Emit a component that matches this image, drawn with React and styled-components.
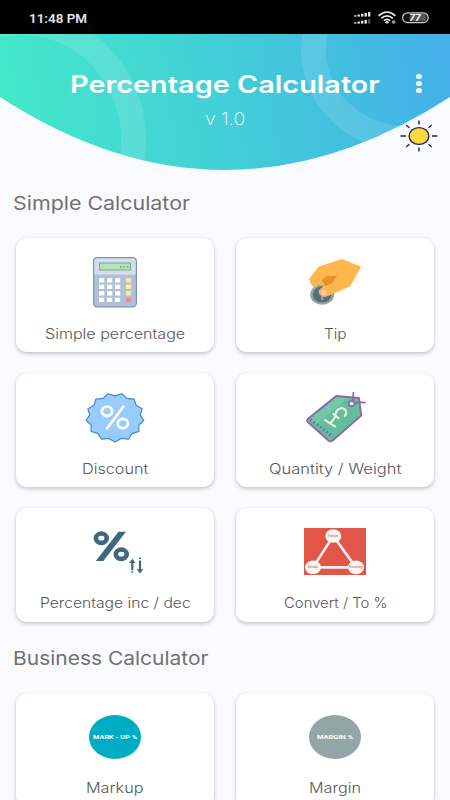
import React, { useLayoutEffect, useRef, useState } from "react";
import styled, { createGlobalStyle } from "styled-components";

const GlobalStyle = createGlobalStyle`
  * {
    box-sizing: border-box;
  }
  body {
    margin: 0;
    background-color: #fafbff;
    font-family: Inter, "Open Sans", sans-serif;
    overflow: hidden;
  }
`;

const Screen = styled.div`
  display: flex;
  flex-direction: column;
  width: 450px;
  height: 800px;
  overflow: hidden;
  background-color: #fafbff;
`;

const StatusBar = styled.div`
  display: flex;
  flex: none;
  justify-content: space-between;
  align-items: center;
  height: 34px;
  padding: 2px 20px 0 29px;
  background-color: #000;
  color: #e6e6e6;
  font-family: Roboto, sans-serif;
  font-size: 12.5px;
  font-weight: 600;
`;

const StatusIcons = styled.div`
  display: flex;
  align-items: center;
  height: 14px;
  svg {
    display: block;
  }
`;

const Header = styled.header`
  position: relative;
  flex: none;
  display: flex;
  flex-direction: column;
  align-items: center;
  height: 137px;
  padding-top: 34px;
  color: #fff;
`;

const Backdrop = styled.svg`
  position: absolute;
  top: 0;
  left: 0;
`;

const Title = styled.h1`
  position: relative;
  margin: 0;
  font-size: 24px;
  font-weight: 600;
  line-height: 33px;
`;

const Version = styled.div`
  position: relative;
  margin-top: 7px;
  font-size: 17px;
  font-weight: 200;
  line-height: 22px;
`;

const MenuButton = styled.button`
  position: absolute;
  top: 40px;
  right: 28px;
  display: flex;
  flex-direction: column;
  gap: 1.6px;
  padding: 0;
  border: 0;
  background: none;
  span {
    width: 6px;
    height: 5.2px;
    border-radius: 50%;
    background-color: #fff;
  }
`;

const ThemeButton = styled.button`
  position: absolute;
  top: 86px;
  right: 12px;
  padding: 0;
  border: 0;
  background: none;
  svg {
    display: block;
  }
`;

const SectionTitle = styled.h2`
  flex: none;
  height: 26px;
  margin: 0 0 0 13px;
  color: #707070;
  font-size: 18.5px;
  font-weight: 400;
  line-height: 26px;
`;

const Section = styled.section`
  flex: none;
  display: flex;
  flex-direction: column;
  padding-top: ${({ $top }) => $top}px;
`;

const Grid = styled.div`
  display: grid;
  grid-template-columns: 198px 198px;
  grid-auto-rows: 114px;
  column-gap: 22px;
  row-gap: 20.7px;
  padding: 22px 16px 5px;
  overflow: hidden;
`;

const Card = styled.div`
  display: flex;
  flex-direction: column;
  align-items: center;
  border-radius: 11px;
  background-color: #fff;
  box-shadow: 0 2px 4px rgba(0, 0, 0, 0.2), 0 0 2px rgba(0, 0, 0, 0.08);
`;

const IconBox = styled.div`
  display: flex;
  justify-content: center;
  align-items: center;
  height: 88px;
  svg {
    display: block;
  }
`;

const Label = styled.div`
  margin-top: -0.5px;
  color: #555;
  font-size: 14px;
  font-weight: 300;
  line-height: 16px;
`;

const Badge = styled.div`
  display: flex;
  justify-content: center;
  align-items: center;
  width: 52px;
  height: 44px;
  border-radius: 50%;
  background-color: ${({ $color }) => $color};
  color: #fff;
  font-family: Roboto, sans-serif;
  font-size: 6px;
  font-weight: 700;
`;

const FitBox = styled.span`
  display: inline-block;
  width: ${({ $width }) => $width}px;
  text-align: left;
  white-space: nowrap;
`;

const FitInner = styled.span`
  display: inline-block;
  transform-origin: 0 50%;
`;

// stretches a line of text horizontally to a fixed width
function Fit({ width, children }) {
  const ref = useRef(null);
  const [scale, setScale] = useState(1);

  useLayoutEffect(() => {
    setScale(width / ref.current.offsetWidth);
  }, [width]);

  return (
    <FitBox $width={width}>
      <FitInner ref={ref} style={{ transform: `scaleX(${scale})` }}>{children}</FitInner>
    </FitBox>
  );
}

function SignalIcon() {
  const bars = [0, 3.5, 7, 10.5, 14];
  return (
    <svg width="18" height="14" viewBox="0 0 18 14">
      {bars.map((x, i) => (
        <g key={x} fill="#e4e4e4">
          <rect x={x} y={4.3 - i * 0.8} width="2.4" height={1.3 + i * 0.8} />
          <rect x={x} y={11.3 - i * 0.8} width="2.4" height={1.3 + i * 0.8} opacity={i === 4 ? 0.35 : 1} />
        </g>
      ))}
    </svg>
  );
}

const Wifi = styled.svg`
  margin: 0 6px;
`;

function WifiIcon() {
  return (
    <Wifi width="18" height="14" viewBox="0 0 18 14">
      <g fill="none" stroke="#ececec" strokeWidth="1.6">
        <path d="M.6 4.8Q9-2.8 17.4 4.8" />
        <path d="M3.2 7.4Q9 2.2 14.8 7.4" />
        <path d="M5.8 9.7Q9 7 12.2 9.7" />
      </g>
      <ellipse cx="9" cy="11.3" rx="1.6" ry="1.3" fill="#ececec" />
      <circle cx="15.6" cy="11" r="1.8" fill="#999" />
    </Wifi>
  );
}

function BatteryIcon() {
  return (
    <svg width="28" height="12" viewBox="0 0 28 12">
      <rect x=".6" y=".8" width="25.6" height="9.8" rx="4.9" fill="#111" stroke="#ccc" strokeWidth="1.2" />
      <rect x="7.5" y="2.1" width="17" height="7.2" rx="3.4" fill="#555" />
      <text x="13" y="9.1" textAnchor="middle" fontFamily="Roboto, sans-serif" fontStyle="italic" fontWeight="700" fontSize="9.2" textLength="11.5" lengthAdjust="spacingAndGlyphs" fill="#fff">77</text>
    </svg>
  );
}

function HeaderBackdrop() {
  return (
    <Backdrop width="450" height="137" viewBox="0 34 450 137">
      <defs>
        <linearGradient id="sea" gradientUnits="userSpaceOnUse" x1="0" y1="100" x2="445" y2="40">
          <stop offset="0" stopColor="#43e8c8" />
          <stop offset="0.5" stopColor="#42cfd8" />
          <stop offset="0.56" stopColor="#42cad9" />
          <stop offset="1" stopColor="#43b0e8" />
        </linearGradient>
        <clipPath id="bowl">
          <path d="M0 34H450V97Q225 243 0 97Z" />
        </clipPath>
      </defs>
      <g clipPath="url(#bowl)">
        <rect y="34" width="450" height="137" fill="url(#sea)" />
        <g fill="none" stroke="#fff" strokeOpacity="0.12" strokeWidth="25">
          <ellipse cx="22" cy="140" rx="111.5" ry="117.5" />
          <ellipse cx="408" cy="50" rx="94.5" ry="89" />
        </g>
      </g>
    </Backdrop>
  );
}

function SunIcon() {
  return (
    <svg width="38" height="32" viewBox="0 0 38 32">
      <ellipse cx="19" cy="16" rx="9.9" ry="8.4" fill="#ffd93b" stroke="#10275c" strokeWidth="1.4" />
      <path
        d="M19 .5v4M19 27.5v4M.5 16H6M32 16h5.5M6.2 5l3.2 2.8M31.8 5l-3.2 2.8M6.2 27l3.2-2.8M31.8 27l-3.2-2.8"
        stroke="#10275c"
        strokeWidth="1.4"
      />
    </svg>
  );
}

function CalculatorIcon() {
  const rows = [21.2, 27.7, 34.2, 40.7];
  return (
    <svg width="44" height="51" viewBox="0 0 44 51">
      <rect x=".6" y=".6" width="42.8" height="49.2" rx="3.6" fill="#b0c1d5" />
      <path d="M.6 17.5V4.2Q.6.6 4.2.6H39.8Q43.4.6 43.4 4.2V17.5Z" fill="#d5def0" />
      <rect x=".6" y=".6" width="42.8" height="49.2" rx="3.6" fill="none" stroke="#7d94ae" strokeWidth="1.2" />
      <rect x="6.5" y="6" width="31" height="7" fill="#bae0bd" stroke="#72ab83" />
      <path d="M27 10h1.6M30.4 10H32M33.8 10h1.6" stroke="#417d59" strokeWidth="1.2" />
      {rows.map((y, i) => (
        <g key={y} fill="#fff">
          <rect x="6" y={y} width="5.2" height="4.3" />
          <rect x="14" y={y} width="5.2" height="4.3" />
          <rect x="22" y={y} width="5.2" height="4.3" />
          <rect x="33" y={y} width="5.2" height="4.3" fill={i === 3 ? "#f48c8c" : "#ffeba0"} />
        </g>
      ))}
    </svg>
  );
}

function TipIcon() {
  return (
    <svg width="54" height="48" viewBox="-1 -.5 54 48">
      <ellipse cx="13.2" cy="36" rx="12" ry="10.2" fill="#90a4ae" />
      <ellipse cx="13.2" cy="36" rx="9.4" ry="8" fill="#546e7a" />
      <path d="M12 37h2.4v4.5H12z" fill="#90a4ae" />
      <path d="M0 20.5L9.6 8.2 33 .4 52.2 8.2 41 28 19 37.6Q13 40 10.2 35.5 8.5 32 12 29.8L15 27.5Q8.8 25 5 29.6Q1 25 0 20.5Z" fill="#ffb74d" />
      <path d="M12.5 22L17.5 17.5H28.2L22.5 25.2 16.5 27.6Z" fill="#e5932b" />
      <path d="M12.7 32.2Q14 31 16.3 31.5 18.3 34 17.5 36 14.5 38 13 35.8 12 34 12.7 32.2Z" fill="#ffc5cd" />
    </svg>
  );
}

// serrated seal: alternates an outer and inner radius around the centre
const teeth = 13;
const sealPoints = Array.from({ length: teeth * 2 }, (_, i) => {
  const angle = (Math.PI * i) / teeth + Math.PI / 2;
  const r = i % 2 ? 0.88 : 1;
  return `${30 + Math.cos(angle) * 29 * r},${25.5 + Math.sin(angle) * 24.5 * r}`;
}).join(" ");

function DiscountIcon() {
  return (
    <svg width="60" height="51" viewBox="0 0 60 51">
      <polygon points={sealPoints} fill="#98ccfd" stroke="#4788c7" strokeWidth="1.2" strokeLinejoin="round" />
      <g fill="none" stroke="#fff" strokeWidth="2.8">
        <ellipse cx="22" cy="19.3" rx="5.1" ry="4.7" />
        <ellipse cx="37.8" cy="31.5" rx="5.1" ry="4.7" />
        <path d="M39 13.8L21.5 37.3" strokeWidth="2.6" />
      </g>
    </svg>
  );
}

function PriceTagIcon() {
  return (
    <svg width="62" height="52" viewBox="-1 -1 62 52">
      <path d="M2.8 27L31.2 4 54 6 56.2 23.6 28 48.2Q25.7 50 23.5 48.5L2.8 30Q1.5 28.4 2.8 27Z" fill="#62bf9d" />
      <path d="M5 27L32 5 43 6 10.5 32.5Z" fill="#83cfb3" opacity=".55" />
      <path d="M2.8 27L31.2 4 54 6 56.2 23.6 28 48.2Q25.7 50 23.5 48.5L2.8 30Q1.5 28.4 2.8 27Z" fill="none" stroke="#8e69a4" strokeWidth="2" strokeLinejoin="round" />
      <path d="M5.5 27.5L28 45" fill="none" stroke="#8068a0" strokeWidth="2.8" strokeDasharray="1.6 2.4" />
      <ellipse cx="46.7" cy="11.6" rx="3" ry="2.5" fill="#fff" stroke="#8e69a4" strokeWidth="1.8" />
      <path d="M47.7 10L48.5 0M49.8 11.3Q53 10 60.7 10.7" fill="none" stroke="#8e69a4" strokeWidth="1.7" />
      <path d="M19.3 27.7L30.7 34.8M25 31.2Q30.5 26.8 30.8 21.5 31.5 17.2 36 16.2 40.3 16 41.2 19.7 41.4 22.5 39.2 24.6M27.8 21.4L34.2 26.6" fill="none" stroke="#f4f1d8" strokeWidth="2" />
    </svg>
  );
}

const IncDec = styled.svg`
  margin-left: 6px;
`;

function IncDecIcon() {
  return (
    <IncDec width="51" height="45" viewBox="0 -.7 51 45">
      <g fill="none" stroke="#41677f">
        <ellipse cx="8.3" cy="8.5" rx="5.4" ry="4.7" strokeWidth="4.6" />
        <ellipse cx="28.3" cy="24.5" rx="5.4" ry="4.7" strokeWidth="4.6" />
        <path d="M39.3 43v-1.3M39.3 40.5V31M47 28v1.3M47 30.8V41" strokeWidth="2.2" />
      </g>
      <path d="M25.5 2H33L10.3 31.2H2.8Z" fill="#41677f" />
      <path d="M36 33.2L39.3 29 42.6 33.2ZM43.7 39.5L47 43.7 50.3 39.5Z" fill="#41677f" />
    </IncDec>
  );
}

function ConvertIcon() {
  const nodes = [
    { x: 29.3, y: 8, text: "Fraction", w: 10 },
    { x: 9, y: 39.4, text: "Decimal", w: 10 },
    { x: 52, y: 39.4, text: "Percentage", w: 14 },
  ];
  return (
    <svg width="62" height="47" viewBox="0 0 62 47">
      <rect width="62" height="47" fill="#e25649" />
      <path d="M29.3 8L9 39.4H52Z" fill="none" stroke="#f8f0f0" strokeWidth="2.6" />
      {nodes.map((n) => (
        <g key={n.text}>
          <ellipse cx={n.x} cy={n.y} rx="8" ry="6.8" fill="#faf7f7" />
          <text x={n.x} y={n.y + 1} textAnchor="middle" fontFamily="Roboto, sans-serif" fontSize="3" fontWeight="700" textLength={n.w} lengthAdjust="spacingAndGlyphs" fill="#e07b73">{n.text}</text>
        </g>
      ))}
    </svg>
  );
}

const simple = [
  { label: "Simple percentage", width: 140, icon: <CalculatorIcon /> },
  { label: "Tip", width: 23, icon: <TipIcon /> },
  { label: "Discount", width: 66, icon: <DiscountIcon /> },
  { label: "Quantity / Weight", width: 132, icon: <PriceTagIcon /> },
  { label: "Percentage inc / dec", width: 151, icon: <IncDecIcon /> },
  { label: "Convert / To %", width: 103, icon: <ConvertIcon /> },
];

const business = [
  { label: "Markup", width: 58, icon: <Badge $color="#00acc3"><Fit width={44}>MARK - UP %</Fit></Badge> },
  { label: "Margin", width: 52, icon: <Badge $color="#94a5a5"><Fit width={36}>MARGIN %</Fit></Badge> },
];

function Cards({ items }) {
  return (
    <Grid>
      {items.map((item) => (
        <Card key={item.label}>
          <IconBox>{item.icon}</IconBox>
          <Label><Fit width={item.width}>{item.label}</Fit></Label>
        </Card>
      ))}
    </Grid>
  );
}

function App() {
  return (
    <Screen>
      <GlobalStyle />
      <StatusBar>
        <Fit width={58}>11:48 PM</Fit>
        <StatusIcons>
          <SignalIcon />
          <WifiIcon />
          <BatteryIcon />
        </StatusIcons>
      </StatusBar>
      <Header>
        <HeaderBackdrop />
        <Title><Fit width={310}>Percentage Calculator</Fit></Title>
        <Version><Fit width={40}>v 1.0</Fit></Version>
        <MenuButton aria-label="Menu">
          <span />
          <span />
          <span />
        </MenuButton>
        <ThemeButton aria-label="Theme"><SunIcon /></ThemeButton>
      </Header>
      <Section $top={19.4}>
        <SectionTitle><Fit width={177}>Simple Calculator</Fit></SectionTitle>
        <Cards items={simple} />
      </Section>
      <Section $top={18}>
        <SectionTitle><Fit width={195}>Business Calculator</Fit></SectionTitle>
        <Cards items={business} />
      </Section>
    </Screen>
  );
}
export default App;
